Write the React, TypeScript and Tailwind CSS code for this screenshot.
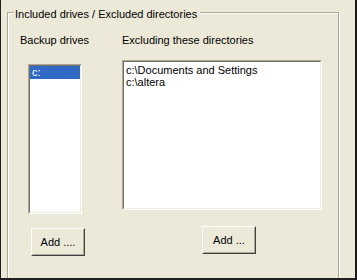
import React from "react";

function ListBox({ className, children }: { className: string; children?: React.ReactNode }) {
  return (
    <div className={`border border-t-[#aca899] border-l-[#aca899] border-b-white border-r-white ${className}`}>
      <div className="h-full border border-t-[#716f64] border-l-[#716f64] border-b-[#f1efe2] border-r-[#f1efe2] bg-white overflow-hidden">
        {children}
      </div>
    </div>
  );
}

function Button({ label, className }: { label: string; className: string }) {
  return (
    <div className={`w-[54px] h-[28px] border border-t-white border-l-white border-b-[#404040] border-r-[#404040] ${className}`}>
      <div className="h-full border border-t-transparent border-l-transparent border-b-[#aca899] border-r-[#aca899] flex items-center justify-center bg-[#ece9d8]">
        <span className="leading-[13px]">{label}</span>
      </div>
    </div>
  );
}

export default function App() {
  return (
    <div
      className="w-[357px] h-[280px] bg-[#ece9d8] border-l border-l-[#202020] border-r-2 border-r-[#1a1a1a] border-b-2 border-b-[#202020] overflow-hidden text-black text-[11px]"
      style={{ fontFamily: '"Liberation Sans", Arial, sans-serif' }}
    >
      <div className="relative ml-[6px] mt-[12px] w-[332px] h-[300px] border border-[#aca899] shadow-[inset_1px_1px_0_white,1px_1px_0_white]">
        <div className="absolute top-[-5px] left-[6px] pl-[1px] pr-[3px] bg-[#ece9d8] leading-[13px]">
          Included drives / Excluded directories
        </div>
        <div className="flex pt-[21px]">
          <div className="ml-[12px] w-[102px] flex flex-col items-start">
            <div className="leading-[13px]">Backup drives</div>
            <ListBox className="ml-[8px] mt-[17px] w-[54px] h-[150px]">
              <div className="leading-[13px] bg-[#316ac5] text-white pl-[2px]">c:</div>
            </ListBox>
            <Button label="Add ...." className="ml-[11px] mt-[14px]" />
          </div>
          <div className="flex flex-col items-start">
            <div className="leading-[13px]">Excluding these directories</div>
            <ListBox className="mt-[13px] w-[200px] h-[150px]">
              <div className="pt-[2px] pl-[2px] leading-[12px]">
                <div>c:\Documents and Settings</div>
                <div>c:\altera</div>
              </div>
            </ListBox>
            <Button label="Add ..." className="ml-[80px] mt-[16px]" />
          </div>
        </div>
      </div>
    </div>
  );
}
